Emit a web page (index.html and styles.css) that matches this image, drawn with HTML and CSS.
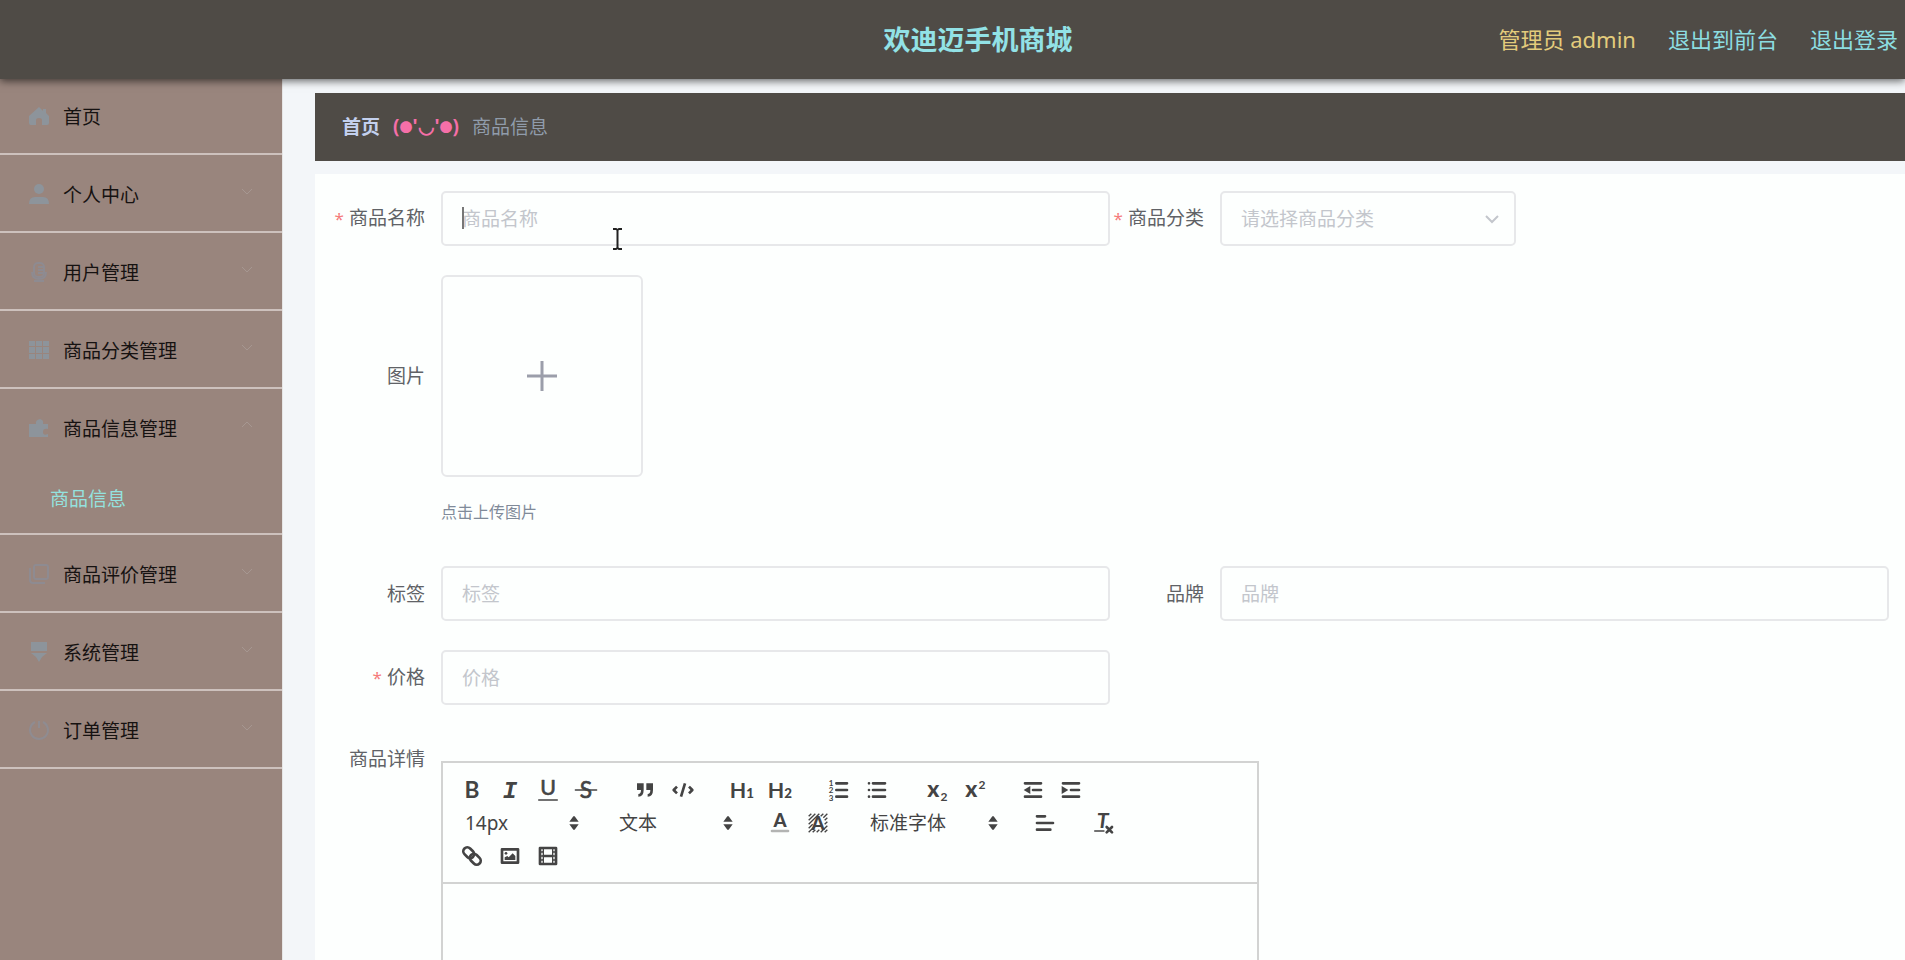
FILE: index.html
```html
<!DOCTYPE html>
<html lang="zh-CN">

<head>
    <meta charset="UTF-8">
    <meta name="viewport" content="width=device-width, initial-scale=1.0">
    <title>欢迪迈手机商城</title>

    <link rel="stylesheet" href="styles.css">
</head>

<body>

    <header class="navbar">
        <h1 class="navbar-title">欢迪迈手机商城</h1>
        <div class="navbar-right">
            <span class="navbar-user">管理员 admin</span>
            <a href="#">退出到前台</a>
            <a href="#">退出登录</a>
        </div>
    </header>

    <div class="container">
        <nav class="sidebar">
            <ul class="menu">
                <li class="menu-item">
                    <a class="menu-title" href="#">
                        <svg class="menu-icon solid" viewBox="0 0 20 20"><path d="M10 1 0 10v7q0 2 2 2h5v-5q0-2 3-2t3 2v5h5q2 0 2-2v-7l-3-3V3h-3v2z"/></svg>
                        <span>首页</span>
                    </a>
                </li>
                <li class="menu-item">
                    <a class="menu-title" href="#">
                        <svg class="menu-icon solid" viewBox="0 0 20 20"><circle cx="10" cy="5" r="5"/><path d="M0 20q0-7 6-7h8q6 0 6 7z"/></svg>
                        <span>个人中心</span>
                        <svg class="menu-arrow" viewBox="0 0 14 14"><path d="M2 5l5 5 5-5"/></svg>
                    </a>
                </li>
                <li class="menu-item">
                    <a class="menu-title" href="#">
                        <svg class="menu-icon" viewBox="0 0 20 20"><rect x="5" y="1" width="10" height="14" rx="4"/><path d="M3 10q0 7 7 7t7-7M10 17v2M5 19h10M9 5h5M9 8h5M9 11h5"/></svg>
                        <span>用户管理</span>
                        <svg class="menu-arrow" viewBox="0 0 14 14"><path d="M2 5l5 5 5-5"/></svg>
                    </a>
                </li>
                <li class="menu-item">
                    <a class="menu-title" href="#">
                        <svg class="menu-icon solid" viewBox="0 0 20 20"><path d="M0 1h6v5H0zM7 1h6v5H7zM14 1h6v5h-6zM0 7h6v6H0zM7 7h6v6H7zM14 7h6v6h-6zM0 14h6v5H0zM7 14h6v5H7zM14 14h6v5h-6z"/></svg>
                        <span>商品分类管理</span>
                        <svg class="menu-arrow" viewBox="0 0 14 14"><path d="M2 5l5 5 5-5"/></svg>
                    </a>
                </li>
                <li class="menu-item">
                    <a class="menu-title" href="#">
                        <svg class="menu-icon solid" viewBox="0 0 20 20"><path d="M0 6h7q-1-4 4-5 4 1 3 5h5v5q-5-1-5 3t5 2v3H0z"/></svg>
                        <span>商品信息管理</span>
                        <svg class="menu-arrow" viewBox="0 0 14 14"><path d="M2 9l5-5 5 5"/></svg>
                    </a>
                    <ul class="submenu">
                        <li><a class="submenu-link" href="#">商品信息</a></li>
                    </ul>
                </li>
                <li class="menu-item">
                    <a class="menu-title" href="#">
                        <svg class="menu-icon" viewBox="0 0 20 20"><rect x="5" y="1" width="14" height="14" rx="2"/><path d="M1 4v12q0 3 3 3h12"/></svg>
                        <span>商品评价管理</span>
                        <svg class="menu-arrow" viewBox="0 0 14 14"><path d="M2 5l5 5 5-5"/></svg>
                    </a>
                </li>
                <li class="menu-item">
                    <a class="menu-title" href="#">
                        <svg class="menu-icon solid" viewBox="0 0 20 20"><path d="M2 0h16v9H2zM2 11h16l-5 4-3 5-3-5z"/></svg>
                        <span>系统管理</span>
                        <svg class="menu-arrow" viewBox="0 0 14 14"><path d="M2 5l5 5 5-5"/></svg>
                    </a>
                </li>
                <li class="menu-item">
                    <a class="menu-title" href="#">
                        <svg class="menu-icon" viewBox="0 0 20 20"><path d="M6 2a9 9 0 1 0 8 0M10 1v7"/></svg>
                        <span>订单管理</span>
                        <svg class="menu-arrow" viewBox="0 0 14 14"><path d="M2 5l5 5 5-5"/></svg>
                    </a>
                </li>
            </ul>
        </nav>

        <main class="main">
            <div class="breadcrumb">
                <a class="breadcrumb-home" href="#">首页</a>
                <span class="breadcrumb-face">(<span class="cheek">●</span>'◡'<span class="cheek">●</span>)</span>
                <span>商品信息</span>
            </div>

            <form class="form">
                <div class="form-item">
                    <label class="form-label required" for="name">商品名称</label>
                    <div class="form-content">
                        <input class="form-input" id="name" type="text" placeholder="商品名称">
                        <span class="caret"></span>
                        <svg class="pointer" viewBox="0 0 11 22"><path d="M1 1h3l1.500 1L7 1h3M5.500 2v18M1 21h3l1.500-1L7 21h3"/></svg>
                    </div>
                </div>
                <div class="form-item">
                    <label class="form-label required" for="category">商品分类</label>
                    <div class="form-content">
                        <div class="form-select">
                            <select class="form-input" id="category">
                                <option>请选择商品分类</option>
                            </select>
                            <svg class="select-arrow" viewBox="0 0 16 16"><path d="M2 5l6 6 6-6"/></svg>
                        </div>
                    </div>
                </div>

                <div class="form-item full middle">
                    <label class="form-label" for="upload">图片</label>
                    <div class="form-content">
                        <button class="upload" id="upload" type="button" aria-label="点击上传图片">
                            <svg viewBox="0 0 32 32"><path d="M16 1v30M1 16h30"/></svg>
                        </button>
                        <p class="upload-tip">点击上传图片</p>
                    </div>
                </div>

                <div class="form-item">
                    <label class="form-label" for="tag">标签</label>
                    <div class="form-content"><input class="form-input" id="tag" type="text" placeholder="标签"></div>
                </div>
                <div class="form-item">
                    <label class="form-label" for="brand">品牌</label>
                    <div class="form-content"><input class="form-input" id="brand" type="text" placeholder="品牌"></div>
                </div>

                <div class="form-item first">
                    <label class="form-label required" for="price">价格</label>
                    <div class="form-content"><input class="form-input" id="price" type="text" placeholder="价格"></div>
                </div>

                <div class="form-item full top">
                    <label class="form-label" for="detail">商品详情</label>
                    <div class="form-content">
                        <div class="editor">
                            <div class="toolbar">
                                <div class="toolbar-row">
                                    <div class="tool-group">
                                        <button type="button" class="tool" aria-label="粗体"><svg viewBox="0 0 18 18"><text x="9" y="15" font-size="17">B</text></svg></button>
                                        <button type="button" class="tool" aria-label="斜体"><svg viewBox="0 0 18 18"><text class="slant" x="9" y="15" font-size="18">I</text></svg></button>
                                        <button type="button" class="tool" aria-label="下划线"><svg viewBox="0 0 18 18"><text class="light" x="9" y="13" font-size="16">U</text><path class="thin" d="M2 16.500h14"/></svg></button>
                                        <button type="button" class="tool" aria-label="删除线"><svg viewBox="0 0 18 18"><text class="light" x="9" y="15" font-size="17">S</text><path class="thin" d="M1 9h16"/></svg></button>
                                    </div>
                                    <div class="tool-group">
                                        <button type="button" class="tool" aria-label="引用"><svg viewBox="0 0 18 18"><path class="fill" d="M3 4h5v5q0 5-4 5v-2q2 0 2-3H3zM10 4h5v5q0 5-4 5v-2q2 0 2-3h-3z"/></svg></button>
                                        <button type="button" class="tool" aria-label="代码"><svg viewBox="0 0 18 18"><path class="mid" d="M4.500 6.500 2 9l2.500 2.500M13.500 6.500 16 9l-2.500 2.500M10.500 4l-3 10"/></svg></button>
                                    </div>
                                    <div class="tool-group">
                                        <button type="button" class="tool" aria-label="标题1"><svg viewBox="0 0 18 18"><text x="6" y="15" font-size="16">H</text><text class="heavy" x="15" y="15" font-size="10">1</text></svg></button>
                                        <button type="button" class="tool" aria-label="标题2"><svg viewBox="0 0 18 18"><text x="6" y="15" font-size="16">H</text><text class="heavy" x="15" y="15" font-size="10">2</text></svg></button>
                                    </div>
                                    <div class="tool-group">
                                        <button type="button" class="tool" aria-label="有序列表"><svg viewBox="0 0 18 18"><path d="M7 4h8M7 9h8M7 14h8"/><text x="3" y="6" font-size="6">1</text><text x="3" y="11" font-size="6">2</text><text x="3" y="17" font-size="6">3</text></svg></button>
                                        <button type="button" class="tool" aria-label="无序列表"><svg viewBox="0 0 18 18"><path d="M6 4h9M6 9h9M6 14h9M3 4h0M3 9h0M3 14h0"/></svg></button>
                                    </div>
                                    <div class="tool-group">
                                        <button type="button" class="tool" aria-label="下标"><svg viewBox="0 0 18 18"><text class="heavy" x="7" y="14" font-size="17">x</text><text x="15" y="17" font-size="9">2</text></svg></button>
                                        <button type="button" class="tool" aria-label="上标"><svg viewBox="0 0 18 18"><text class="heavy" x="7" y="14" font-size="17">x</text><text x="15" y="8" font-size="9">2</text></svg></button>
                                    </div>
                                    <div class="tool-group">
                                        <button type="button" class="tool" aria-label="减少缩进"><svg viewBox="0 0 18 18"><path d="M3 4h12M3 14h12M9 9h6"/><path class="fill" d="M7 6v6L2 9z"/></svg></button>
                                        <button type="button" class="tool" aria-label="增加缩进"><svg viewBox="0 0 18 18"><path d="M3 4h12M3 14h12M9 9h6"/><path class="fill" d="M2 6v6l5-3z"/></svg></button>
                                    </div>
                                </div>
                                <div class="toolbar-row">
                                    <div class="tool-group picker">
                                        <select aria-label="字号"><option>14px</option></select>
                                        <svg viewBox="0 0 18 18"><path class="fill" d="M8.500 4h1l3 4h-7zM8.500 14h1l3-4h-7z"/></svg>
                                    </div>
                                    <div class="tool-group picker">
                                        <select aria-label="段落"><option>文本</option></select>
                                        <svg viewBox="0 0 18 18"><path class="fill" d="M8.500 4h1l3 4h-7zM8.500 14h1l3-4h-7z"/></svg>
                                    </div>
                                    <div class="tool-group">
                                        <button type="button" class="tool" aria-label="文字颜色"><svg viewBox="0 0 18 18"><text class="heavy" x="9" y="12" font-size="14">A</text><path class="faded" d="M3 15h12"/></svg></button>
                                        <button type="button" class="tool" aria-label="背景颜色"><svg viewBox="0 0 18 18"><path class="hatch" d="M2 4l2-2M2 7l5-5M2 10l8-8M2 13l3-3M8 4l2-2M2 16l4-4M11 4l2-2M5 16l2-2M13 5l3-3M8 16l2-2M14 7l2-2M11 16l5-5M14 10l2-2M14 16l2-2"/><text class="heavy" x="9" y="14" font-size="14">A</text></svg></button>
                                    </div>
                                    <div class="tool-group picker wide">
                                        <select aria-label="字体"><option>标准字体</option></select>
                                        <svg viewBox="0 0 18 18"><path class="fill" d="M8.500 4h1l3 4h-7zM8.500 14h1l3-4h-7z"/></svg>
                                    </div>
                                    <div class="tool-group">
                                        <button type="button" class="tool" aria-label="对齐"><svg viewBox="0 0 18 18"><path d="M3 4h6M3 9h12M3 14h10"/></svg></button>
                                    </div>
                                    <div class="tool-group">
                                        <button type="button" class="tool" aria-label="清除格式"><svg viewBox="0 0 18 18"><text class="oblique" x="8" y="13" font-size="16">T</text><path class="thin" d="M2 15h7"/><path d="M11 12l4 4M15 12l-4 4"/></svg></button>
                                    </div>
                                </div>
                                <div class="toolbar-row">
                                    <div class="tool-group">
                                        <button type="button" class="tool" aria-label="链接"><svg viewBox="0 0 18 18"><g transform="rotate(45 9 9)"><rect x="1" y="6" width="9" height="6" rx="3"/><rect x="8" y="6" width="9" height="6" rx="3"/></g></svg></button>
                                        <button type="button" class="tool" aria-label="图片"><svg viewBox="0 0 18 18"><rect x="3" y="4" width="12" height="10"/><circle class="fill" cx="6" cy="7" r="1"/><path class="fill" d="M5 12v-2l2-1 1 1 3-3 2 2v3z"/></svg></button>
                                        <button type="button" class="tool" aria-label="视频"><svg viewBox="0 0 18 18"><rect x="3" y="3" width="12" height="12"/><path class="thin" d="M5.500 3v12M12.500 3v12M3 6h2M3 9h2M3 12h2M13 6h2M13 9h2M13 12h2"/><path d="M6 9h6"/></svg></button>
                                    </div>
                                </div>
                            </div>
                            <textarea class="editor-body" id="detail"></textarea>
                        </div>
                    </div>
                </div>
            </form>
        </main>
    </div>

</body>

</html>
```

FILE: styles.css
```css
* {
    box-sizing: border-box;
}

body {
    margin: 0;
    height: 100vh;
    overflow: hidden;
    display: flex;
    flex-direction: column;
    background: #f3f6f9;
    color: #606266;
    font-family: "Noto Sans", "Noto Sans CJK SC", sans-serif;
    font-size: 19px;
}

a {
    color: inherit;
    text-decoration: none;
}

button,
input,
select,
textarea {
    font: inherit;
    color: inherit;
}

ul {
    list-style: none;
    margin: 0;
    padding: 0;
}

svg {
    fill: none;
    stroke: currentColor;
}

/* Cabecera */
.navbar {
    flex: none;
    display: grid;
    grid-template-columns: 1fr auto 1fr;
    align-items: center;
    height: 79px;
    padding: 0 7px 2px 58px;
    background: #4f4b46;
    box-shadow: 0 2px 8px rgba(0, 0, 0, .6);
    position: relative;
    z-index: 1;
}

.navbar-title {
    grid-column: 2;
    margin: 0;
    font-size: 27px;
    font-weight: bold;
    color: #92e2e6;
}

.navbar-right {
    display: flex;
    justify-content: flex-end;
    gap: 32px;
    font-size: 22px;
    line-height: 28px;
    color: #8cdde1;
    white-space: nowrap;
}

.navbar-user {
    color: #e3cc7c;
}

.container {
    flex: 1;
    min-height: 0;
    display: flex;
}

/* Menu lateral */
.sidebar {
    flex: none;
    width: 283px;
    margin-top: -2px;
    background: #99857d;
    border-right: 1px solid #e6e6e6;
}

.menu-item {
    border-bottom: 2px solid #cdc1bd;
}

.menu-title {
    display: flex;
    align-items: center;
    height: 76px;
    padding: 2px 28px 0 29px;
    color: #161211;
}

.menu-icon {
    width: 20px;
    height: 20px;
    margin-right: 14px;
    overflow: visible;
    color: #8a8e9a;
    stroke-width: 2;
    opacity: .7;
}

.menu-icon.solid {
    fill: #8d949b;
    stroke: none;
    opacity: 1;
}

.menu-arrow {
    width: 14px;
    height: 14px;
    margin: 0 0 6px auto;
    color: #a69791;
}

.submenu {
    padding: 2px 0;
}

.submenu-link {
    display: block;
    padding-left: 50px;
    line-height: 64px;
    color: #94e2df;
}

/* Contenido */
.main {
    flex: 1;
    min-width: 0;
    padding: 14px 0 0 32px;
}

.breadcrumb {
    display: flex;
    align-items: center;
    gap: 13px;
    height: 68px;
    margin-bottom: 13px;
    padding: 0 27px 2px;
    background: #4f4b46;
    color: #909cab;
}

.breadcrumb-home {
    font-weight: bold;
    color: #c3d0ee;
}

.breadcrumb-face {
    display: flex;
    align-items: center;
    font-weight: bold;
    color: #f56fa8;
}

.cheek {
    font-size: 13px;
}

.form {
    display: grid;
    grid-template-columns: 1fr 1fr;
    row-gap: 29px;
    padding: 17px 16px 0;
    background: #fdfffe;
}

.form-item {
    display: flex;
    align-items: center;
}

.form-item.full {
    grid-column: 1 / 3;
}

.form-item.first {
    grid-column: 1;
}

.form-item.top {
    align-items: flex-start;
}

.form-label {
    flex: none;
    width: 110px;
    padding-right: 16px;
    line-height: 50px;
    text-align: right;
    white-space: nowrap;
}

.form-label.required::before {
    content: "*";
    margin-right: 5px;
    font-size: 17px;
    color: #f57c7c;
}

.form-content {
    flex: 1;
    min-width: 0;
    position: relative;
}

.form-input {
    display: block;
    width: 100%;
    height: 55px;
    padding: 0 19px;
    border: 2px solid #e7e8ea;
    border-radius: 5px;
    background: transparent;
    outline: none;
    appearance: none;
}

.form-input::placeholder,
select.form-input {
    color: #c3c6cc;
    opacity: 1;
}

.form-select {
    width: 296px;
    position: relative;
}

.select-arrow {
    position: absolute;
    right: 16px;
    top: 20px;
    width: 16px;
    height: 16px;
    color: #c3c6cc;
    stroke-width: 2;
    pointer-events: none;
}

.caret {
    position: absolute;
    left: 21px;
    top: 16px;
    width: 2px;
    height: 22px;
    background: #777;
}

.pointer {
    position: absolute;
    left: 171px;
    top: 37px;
    width: 11px;
    height: 22px;
    color: #222;
    stroke-width: 2;
}

/* Subida de imagen */
.upload {
    display: flex;
    align-items: center;
    justify-content: center;
    width: 202px;
    height: 202px;
    padding: 0;
    border: 2px solid #e7e8ea;
    border-radius: 6px;
    background: transparent;
    color: #9b9eaa;
}

.upload svg {
    width: 32px;
    height: 32px;
    stroke-width: 3;
}

.upload-tip {
    margin: 20px 0 10px;
    font-size: 16px;
    line-height: 30px;
    color: #808a99;
}

.form-item.middle .form-label {
    align-self: flex-start;
    line-height: 202px;
}

/* Editor */
.editor {
    max-width: 818px;
    margin-top: 27px;
    border: 2px solid #d2d3d2;
}

.toolbar {
    padding: 10px;
    border-bottom: 2px solid #d2d3d2;
    color: #444;
}

.toolbar-row {
    display: flex;
    gap: 21px;
    height: 33px;
}

.tool-group {
    display: flex;
}

.tool {
    display: flex;
    align-items: center;
    width: 38px;
    padding: 0 7px;
    border: none;
    background: none;
    cursor: pointer;
}

.tool svg,
.picker svg {
    width: 24px;
    height: 24px;
    overflow: visible;
    stroke-width: 2;
    stroke-linecap: round;
    stroke-linejoin: round;
}

.tool text {
    fill: currentColor;
    stroke: none;
    text-anchor: middle;
    font-family: Lato, sans-serif;
    font-weight: bold;
}

.tool .heavy {
    font-weight: 900;
}

.tool .light {
    font-weight: normal;
    stroke: currentColor;
    stroke-width: 0.500;
}

.tool .slant {
    font-family: "Liberation Mono", monospace;
    font-style: italic;
}

.tool .oblique {
    font-style: italic;
}

.tool .thin {
    stroke-width: 1;
}

.tool .hatch {
    stroke-width: 1;
    stroke-linecap: butt;
}

.tool .mid {
    stroke-linecap: butt;
}

.tool .faded {
    opacity: .4;
}

.fill {
    fill: currentColor;
    stroke: none;
}

.picker {
    align-items: center;
    width: 133px;
    position: relative;
}

.picker.wide {
    width: 147px;
}

.picker select {
    width: 100%;
    padding: 0 0 0 12px;
    border: none;
    background: none;
    appearance: none;
    font-size: 19px;
}

.picker svg {
    position: absolute;
    right: 0;
    pointer-events: none;
}

.editor-body {
    display: block;
    width: 100%;
    height: 270px;
    border: none;
    outline: none;
    resize: none;
    background: transparent;
}
```
